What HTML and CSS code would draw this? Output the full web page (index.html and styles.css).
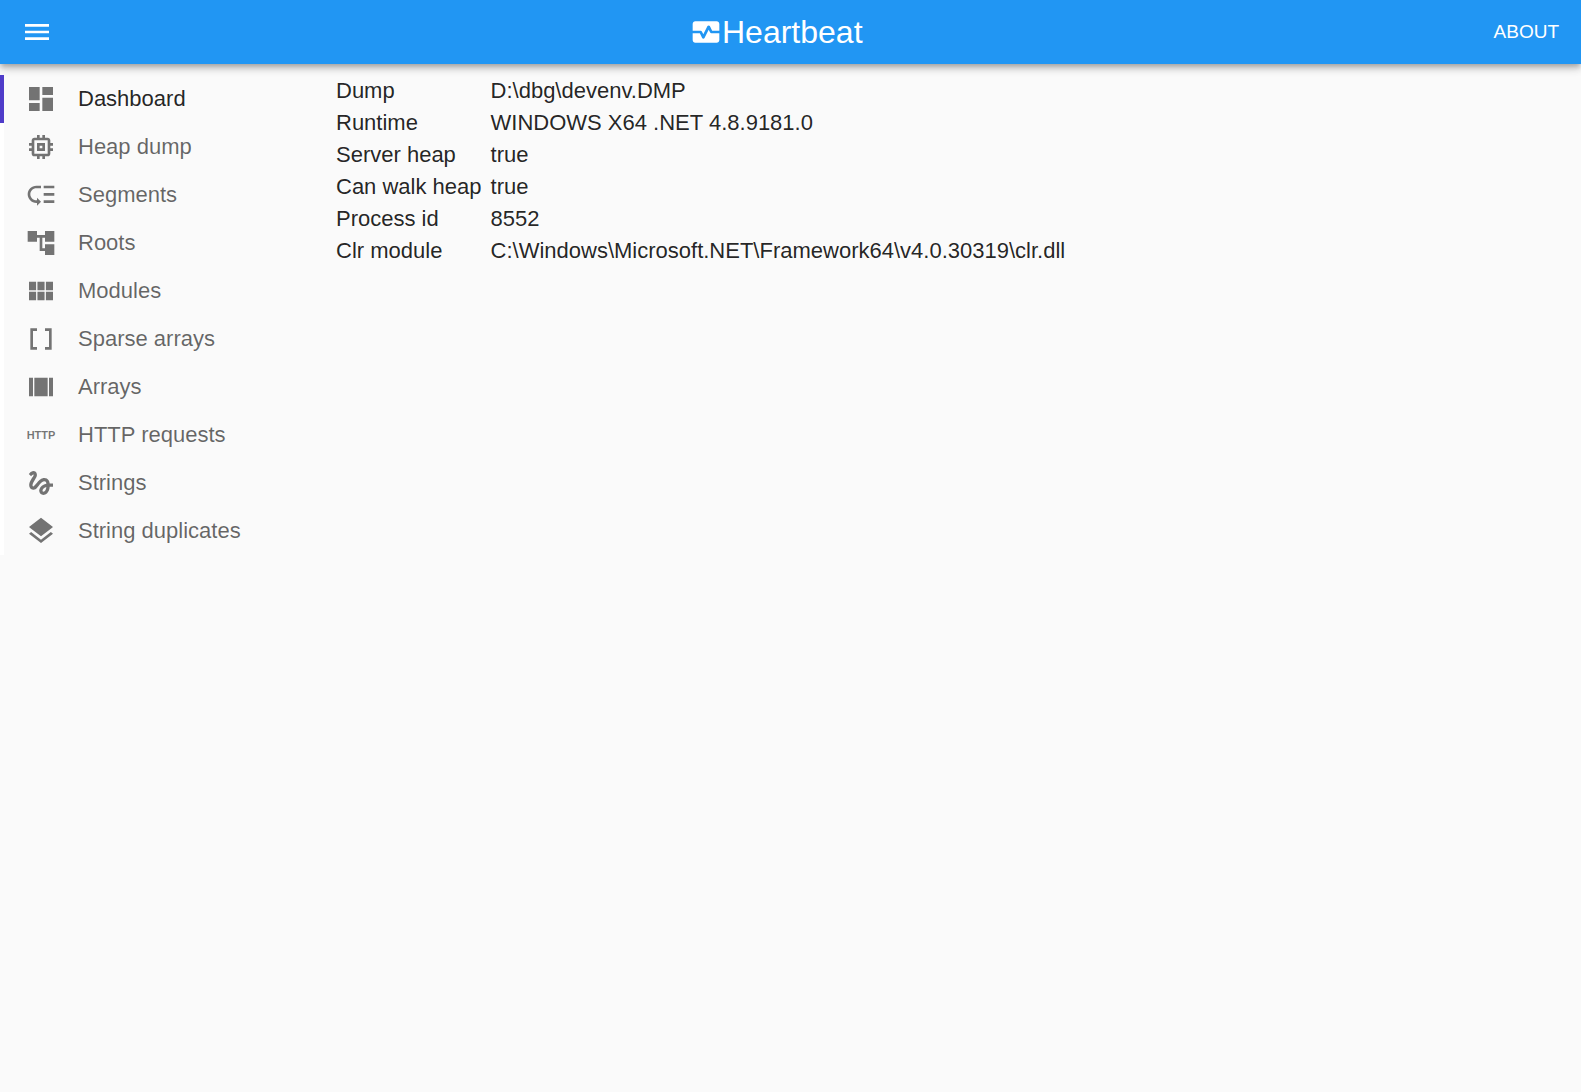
FILE: index.html
```html
<!DOCTYPE html>
<html lang="en">
<head>
<meta charset="utf-8">
<meta name="viewport" content="width=device-width, initial-scale=1">
<title>Heartbeat</title>
<link rel="stylesheet" href="styles.css">
</head>
<body>
<header class="app-bar">
  <button class="menu-button" type="button" aria-label="Toggle menu">
    <svg class="icon" viewBox="0 0 24 24"><path d="M3 18h18v-2H3v2zm0-5h18v-2H3v2zm0-7v2h18V6H3z"/></svg>
  </button>
  <h1 class="brand">
    <svg class="icon" viewBox="0 0 24 24" aria-hidden="true"><path d="M15.11 12.45 14 10.24l-3.11 6.21c-.16.34-.51.55-.89.55s-.73-.21-.89-.55L7.38 13H2v5c0 1.1.9 2 2 2h16c1.1 0 2-.9 2-2v-5h-6c-.38 0-.73-.21-.89-.55z"/><path d="M20 4H4c-1.1 0-2 .9-2 2v5h6c.38 0 .73.21.89.55L10 13.76l3.11-6.21c.34-.68 1.45-.68 1.79 0L16.62 11H22V6c0-1.1-.9-2-2-2z"/></svg>
    <span>Heartbeat</span>
  </h1>
  <button class="about-button" type="button">ABOUT</button>
</header>
<div class="layout">
  <nav class="sidebar" aria-label="Main">
    <a class="nav-item nav-item-active" href="#dashboard" aria-current="page">
      <svg class="icon" viewBox="0 0 24 24"><path d="M3 13h8V3H3v10zm0 8h8v-6H3v6zm10 0h8V11h-8v10zm0-18v6h8V3h-8z"/></svg>
      <span>Dashboard</span>
    </a>
    <a class="nav-item" href="#heap-dump">
      <svg class="icon" viewBox="0 0 24 24"><path d="M15 9H9v6h6V9zm-2 4h-2v-2h2v2zm8-2V9h-2V7c0-1.1-.9-2-2-2h-2V3h-2v2h-2V3H9v2H7c-1.1 0-2 .9-2 2v2H3v2h2v2H3v2h2v2c0 1.1.9 2 2 2h2v2h2v-2h2v2h2v-2h2c1.1 0 2-.9 2-2v-2h2v-2h-2v-2h2zm-4 6H7V7h10v10z"/></svg>
      <span>Heap dump</span>
    </a>
    <a class="nav-item" href="#segments">
      <svg class="icon" viewBox="0 0 24 24"><path d="M14 5h8v2h-8zm0 5.500h8v2h-8zm0 5.500h8v2h-8zM2 11.500C2 15.080 4.920 18 8.500 18H9v2l3-3-3-3v2h-.5C6.020 16 4 13.980 4 11.500S6.020 7 8.500 7H12V5H8.500C4.920 5 2 7.920 2 11.500z"/></svg>
      <span>Segments</span>
    </a>
    <a class="nav-item" href="#roots">
      <svg class="icon" viewBox="0 0 24 24"><path d="M22 11V3h-7v3H9V3H2v8h7V8h2v10h4v3h7v-8h-7v3h-2V8h2v3z"/></svg>
      <span>Roots</span>
    </a>
    <a class="nav-item" href="#modules">
      <svg class="icon" viewBox="0 0 24 24"><path d="M14.67 5v6.500H9.330V5h5.340zm1 6.500H21V5h-5.330v6.500zm-1 7.500v-6.500H9.330V19h5.340zm1-6.500V19H21v-6.500h-5.330zm-7.340 0H3V19h5.330v-6.500zm0-1V5H3v6.500h5.330z"/></svg>
      <span>Modules</span>
    </a>
    <a class="nav-item" href="#sparse-arrays">
      <svg class="icon" viewBox="0 0 24 24"><path d="M15 4v2h3v12h-3v2h5V4zM4 20h5v-2H6V6h3V4H4z"/></svg>
      <span>Sparse arrays</span>
    </a>
    <a class="nav-item" href="#arrays">
      <svg class="icon" viewBox="0 0 24 24"><path d="M3 5h3v14H3zm15 0h3v14h-3zM7 5h10v14H7z"/></svg>
      <span>Arrays</span>
    </a>
    <a class="nav-item" href="#http-requests">
      <span class="icon icon-text" aria-hidden="true">HTTP</span>
      <span>HTTP requests</span>
    </a>
    <a class="nav-item" href="#strings">
      <svg class="icon" viewBox="0 0 24 24"><path d="M4.590 6.890c.7-.71 1.400-1.350 1.710-1.220.5.2 0 1.030-.3 1.520-.25.42-2.860 3.890-2.860 6.310 0 1.280.48 2.340 1.340 2.980.75.56 1.740.73 2.640.46 1.070-.31 1.950-1.400 3.060-2.770 1.210-1.490 2.830-3.440 4.080-3.440 1.630 0 1.650 1.010 1.760 1.790-3.780.64-5.380 3.670-5.380 5.370 0 1.700 1.440 3.090 3.210 3.090 1.630 0 4.290-1.330 4.690-6.100H21v-2.500h-2.470c-.15-1.650-1.090-4.200-4.030-4.200-2.250 0-4.180 1.910-4.940 2.840-.58.73-2.060 2.480-2.290 2.720-.25.3-.68.84-1.110.84-.45 0-.72-.83-.36-1.920.35-1.090 1.400-2.860 1.850-3.520.78-1.140 1.300-1.920 1.300-3.280C8.950 3.690 7.310 3 6.440 3 5.120 3 3.970 4 3.720 4.250c-.36.36-.66.66-.88.93l1.750 1.710zm9.290 11.660c-.31 0-.74-.26-.74-.72 0-.6.73-2.200 2.870-2.760-.3 2.690-1.430 3.480-2.130 3.480z"/></svg>
      <span>Strings</span>
    </a>
    <a class="nav-item" href="#string-duplicates">
      <svg class="icon" viewBox="0 0 24 24"><path d="M11.990 18.540l-7.370-5.730L3 14.070l9 7 9-7-1.630-1.270-7.380 5.740zM12 16l7.360-5.730L21 9l-9-7-9 7 1.630 1.270L12 16z"/></svg>
      <span>String duplicates</span>
    </a>
  </nav>
  <main class="content">
    <table class="info">
      <tbody>
        <tr><th scope="row">Dump</th><td>D:\dbg\devenv.DMP</td></tr>
        <tr><th scope="row">Runtime</th><td>WINDOWS X64 .NET 4.8.9181.0</td></tr>
        <tr><th scope="row">Server heap</th><td>true</td></tr>
        <tr><th scope="row">Can walk heap</th><td>true</td></tr>
        <tr><th scope="row">Process id</th><td>8552</td></tr>
        <tr><th scope="row">Clr module</th><td>C:\Windows\Microsoft.NET\Framework64\v4.0.30319\clr.dll</td></tr>
      </tbody>
    </table>
  </main>
</div>
</body>
</html>
```
FILE: styles.css
```css
* {
  box-sizing: border-box;
}

body {
  margin: 0;
  min-height: 100vh;
  background: #fafafa;
  color: rgba(0, 0, 0, 0.87);
  font-family: "Liberation Sans", Arial, sans-serif;
  font-size: 22px;
  line-height: 32px;
}

.icon {
  display: block;
  flex: none;
  width: 32px;
  height: 32px;
  fill: currentColor;
}

.app-bar {
  display: flex;
  align-items: center;
  height: 64px;
  padding: 0 14px 0 11px;
  background: #2196f3;
  color: #fff;
  box-shadow:
    0 3px 5px -1px rgba(0, 0, 0, 0.2),
    0 5px 7px 0 rgba(0, 0, 0, 0.14),
    0 1px 13px 0 rgba(0, 0, 0, 0.12);
}

.menu-button,
.about-button {
  border: 0;
  background: none;
  color: inherit;
  font-family: inherit;
  cursor: pointer;
}

.menu-button {
  padding: 10px;
}

.about-button {
  padding: 8px 8px 8px 4px;
  font-size: 19px;
  line-height: 32px;
}

.brand {
  display: flex;
  flex: 1;
  align-items: center;
  justify-content: center;
  margin: 0;
  font-size: 32px;
  font-weight: 400;
}

.layout {
  display: flex;
  align-items: flex-start;
  padding-top: 11px;
}

.sidebar {
  flex: 0 0 336px;
}

.nav-item {
  display: flex;
  align-items: center;
  gap: 21px;
  height: 48px;
  padding-left: 21px;
  border-left: 4px solid #fff;
  color: rgba(0, 0, 0, 0.6);
  text-decoration: none;
}

.nav-item .icon {
  color: rgba(0, 0, 0, 0.54);
}

.nav-item-active {
  border-left-color: #4f3cc9;
  color: rgba(0, 0, 0, 0.87);
}

.icon-text {
  display: flex;
  align-items: center;
  justify-content: center;
  font-size: 11px;
  font-weight: 700;
}

.content {
  flex: 1;
  min-width: 0;
}

.info {
  border-collapse: collapse;
}

.info th,
.info td {
  padding: 0;
  font-weight: 400;
  text-align: left;
}

.info th {
  padding-right: 9px;
  white-space: nowrap;
}
```
